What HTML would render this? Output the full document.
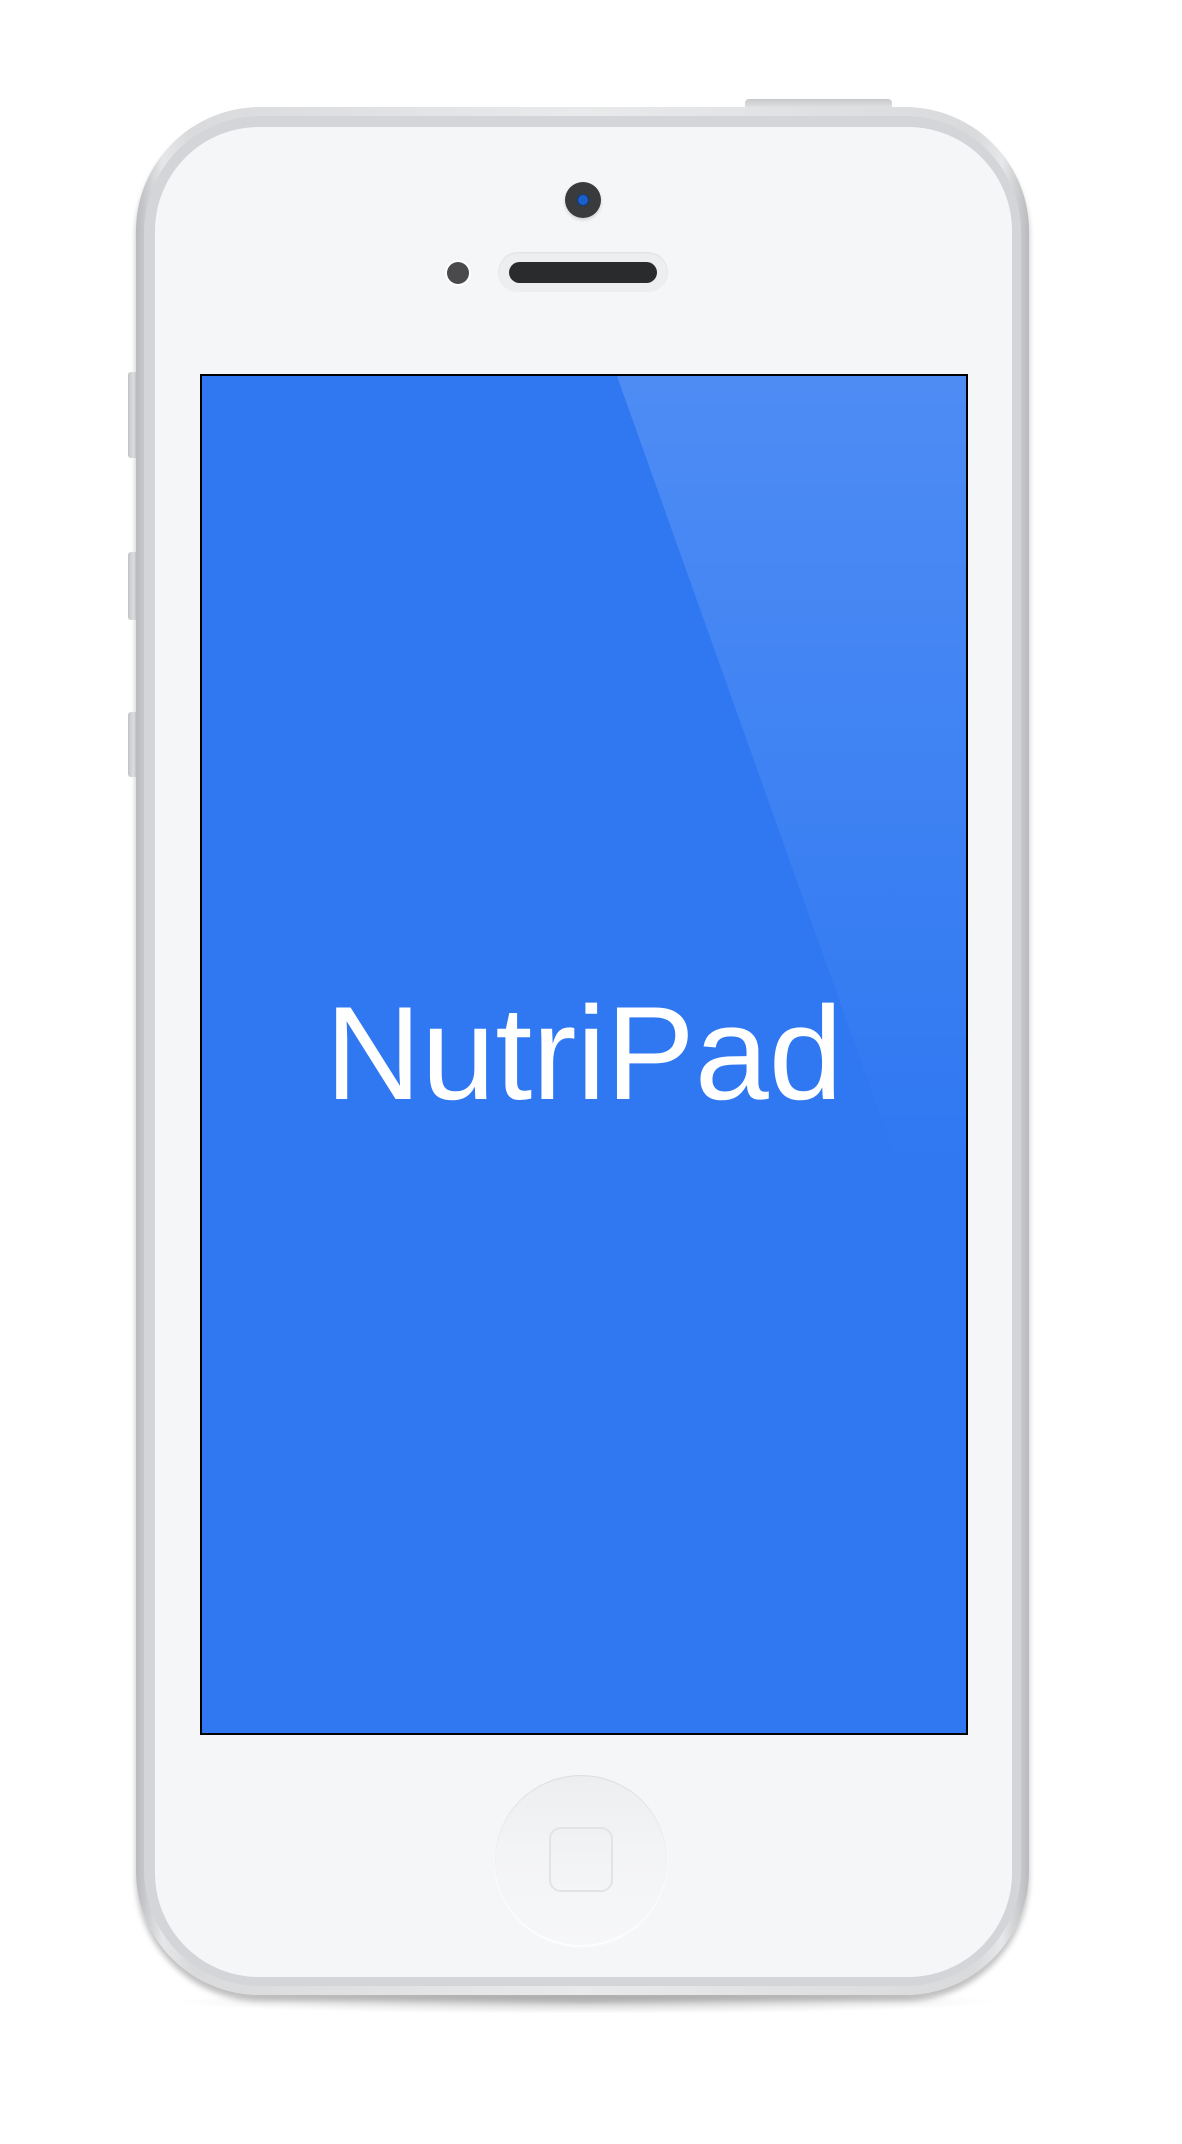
<!DOCTYPE html>
<html><head><meta charset="utf-8"><style>
html,body{margin:0;padding:0;background:#fff;}
body{width:1182px;height:2144px;position:relative;overflow:hidden;font-family:"Liberation Sans",sans-serif;}
.abs{position:absolute;}
.shadow{left:170px;top:1990px;width:830px;height:24px;border-radius:50%;background:radial-gradient(ellipse at center,rgba(0,0,0,0.18),rgba(0,0,0,0) 70%);}
.btn{background:linear-gradient(90deg,#bfc1c4,#e8e9ea,#c9cacc);border-radius:3px 0 0 3px;}
.outer{left:136px;top:107px;width:893px;height:1888px;border-radius:124px;background:linear-gradient(90deg,#b8babd,#e6e7e8 3%,#d9dadc 6%,#e9eaeb 50%,#d9dadc 94%,#e6e7e8 97%,#b8babd);box-shadow:0 6px 6px rgba(0,0,0,0.25);}
.rim{left:144px;top:116px;width:877px;height:1870px;border-radius:116px;background:#d3d5d8;}
.face{left:155px;top:127px;width:857px;height:1850px;border-radius:104px;background:#f5f6f8;}
.screen{left:200px;top:374px;width:764px;height:1357px;background:#2f78f2;border:2px solid #000;overflow:hidden;}
.title{left:0;width:100%;top:612px;text-align:center;color:#fff;font-size:133px;line-height:133px;letter-spacing:0px;}
</style></head><body>
<div class="abs shadow"></div>
<div class="abs" style="left:745px;top:99px;width:147px;height:12px;border-radius:4px 4px 0 0;background:linear-gradient(#c8c9cb,#e9eaeb);"></div>
<div class="abs btn" style="left:128px;top:372px;width:12px;height:86px;"></div>
<div class="abs btn" style="left:128px;top:552px;width:12px;height:68px;"></div>
<div class="abs btn" style="left:128px;top:712px;width:12px;height:65px;"></div>
<div class="abs outer"></div>
<div class="abs rim"></div>
<div class="abs face"></div>
<div class="abs" style="left:565px;top:182px;width:36px;height:36px;border-radius:50%;background:#3a3b3d;box-shadow:0 2px 3px rgba(0,0,0,0.15);"></div>
<div class="abs" style="left:577px;top:194px;width:12px;height:12px;border-radius:50%;background:#1c5fc9;border:1px solid #0d3a80;box-sizing:border-box;"></div>
<div class="abs" style="left:447px;top:262px;width:22px;height:22px;border-radius:50%;background:#4a4a4c;box-shadow:0 0 0 2px #fff;"></div>
<div class="abs" style="left:498px;top:252px;width:170px;height:40px;border-radius:20px;background:#eceef0;box-shadow:inset 0 1px 2px rgba(0,0,0,0.06);"></div>
<div class="abs" style="left:509px;top:262px;width:148px;height:21px;border-radius:11px;background:#2a2b2d;"></div>
<div class="abs screen">
<svg class="abs" style="left:0;top:0" width="764" height="1357"><defs><linearGradient id="g" x1="0" y1="0" x2="0" y2="1"><stop offset="0" stop-color="#fff" stop-opacity="0.15"/><stop offset="1" stop-color="#fff" stop-opacity="0"/></linearGradient></defs><polygon points="415,0 764,0 764,800 700,800" fill="url(#g)"/></svg>
<div class="abs title">NutriPad</div>
</div>
<div class="abs" style="left:495px;top:1775px;width:172px;height:170px;border-radius:50%;background:linear-gradient(#eceef0,#f3f4f6 45%,#f6f7f9);box-shadow:inset 0 1px 1px rgba(0,0,0,0.08),0 2px 2px #fff;"></div>
<div class="abs" style="left:549px;top:1827px;width:64px;height:65px;border-radius:12px;border:2px solid #e2e3e5;box-sizing:border-box;background:linear-gradient(#f0f1f3,#f4f5f7);"></div>
</body></html>
